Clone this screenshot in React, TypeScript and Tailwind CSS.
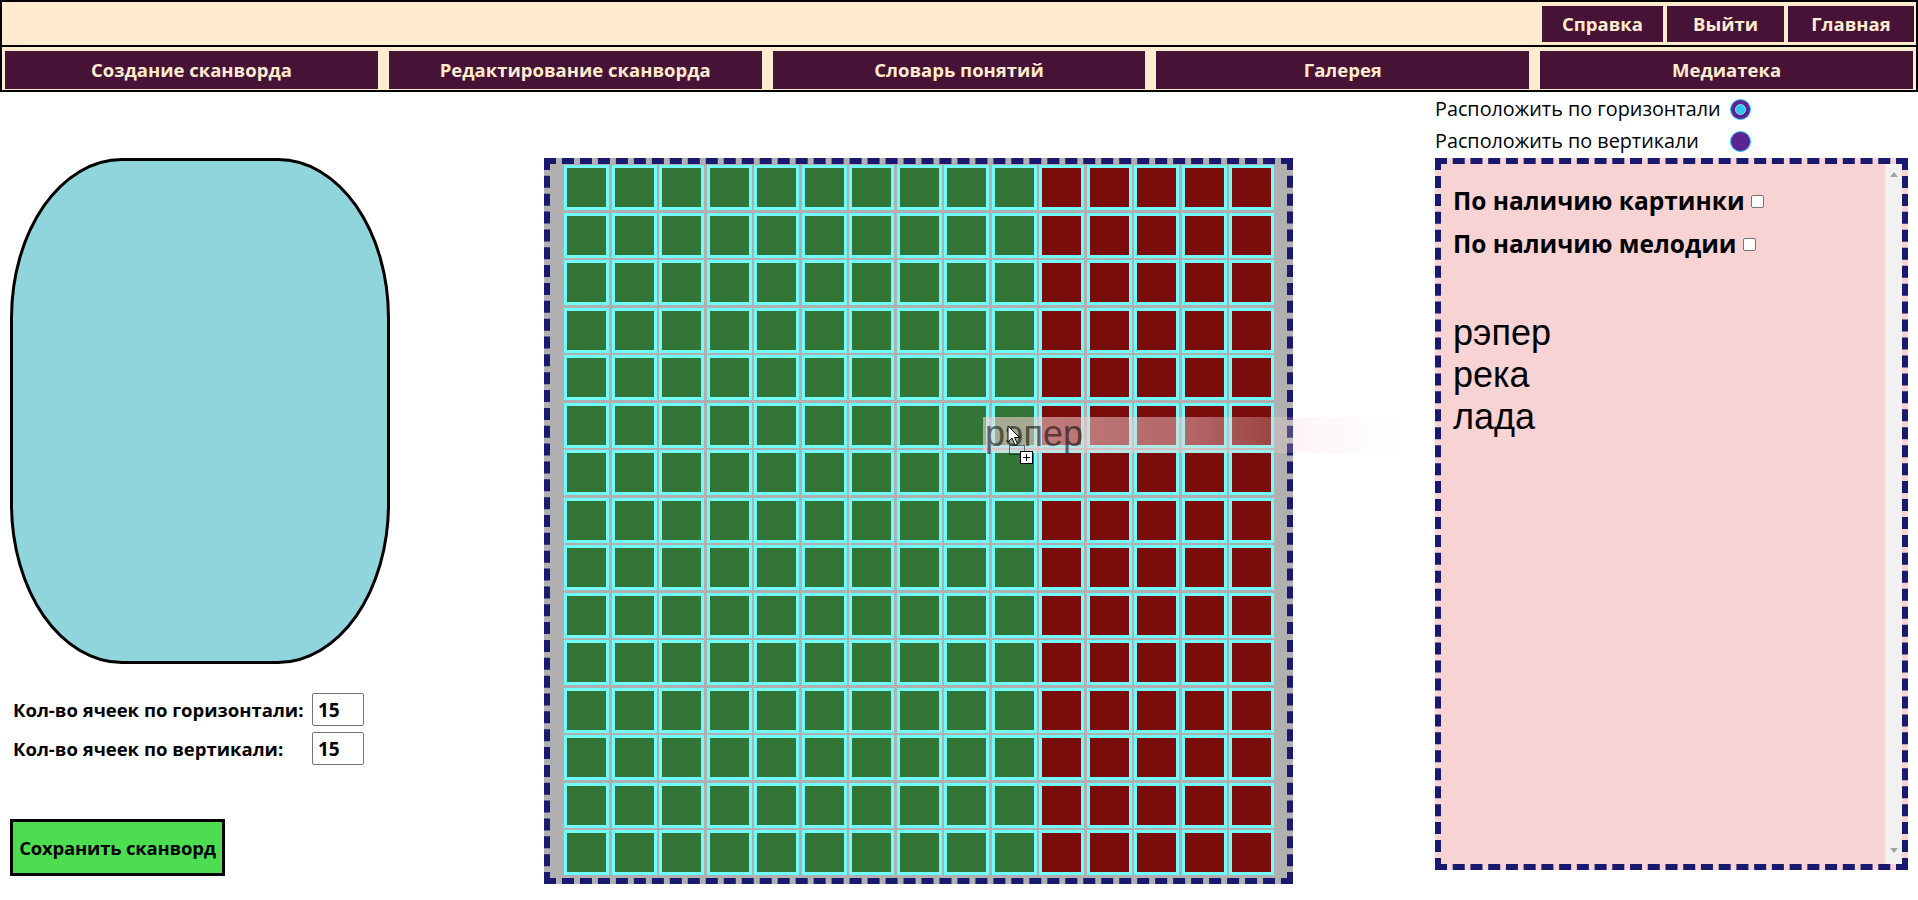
import React from 'react';

const NAV_ITEMS = ['Создание сканворда', 'Редактирование сканворда', 'Словарь понятий', 'Галерея', 'Медиатека'];
const TOP_ITEMS = [
  { label: 'Справка', w: 'w-[121px]' },
  { label: 'Выйти', w: 'w-[117px]' },
  { label: 'Главная', w: 'w-[126px]' },
];
const WORDS = ['рэпер', 'река', 'лада'];
const SIZE = 15;

const Radio: React.FC<{ checked?: boolean }> = ({ checked }) => (
  <span className="shrink-0 w-[21px] h-[21px] rounded-full bg-[#5a2592] border-[1.5px] border-[#29d0ee] flex items-center justify-center">
    {checked && <span className="w-[11px] h-[11px] rounded-full bg-[#2ec4ee] border border-[#7fe6fa]" />}
  </span>
);

const Checkbox: React.FC = () => (
  <span className="ml-[6px] w-[13px] h-[13px] rounded-[2px] border border-[#767676] bg-white" />
);

const Cursor: React.FC = () => (
  <svg className="absolute left-[1007px] top-[425px]" width="30" height="42" viewBox="0 0 30 42">
    <path d="M1 1 L1 17 L5 13 L8 20 L10.5 19 L7.5 12.5 L12.5 12.5 Z" fill="#fff" stroke="#000" strokeWidth="1" />
    <rect x="2.5" y="20.5" width="15" height="9" fill="none" stroke="#000" strokeWidth="1" strokeDasharray="1 1" />
    <rect x="13.5" y="26.5" width="12" height="12" fill="#fff" stroke="#000" strokeWidth="1" />
    <path d="M19.5 29 V36 M16 32.5 H23" stroke="#000" strokeWidth="1" />
  </svg>
);

export default function App() {
  return (
    <div className="relative w-[1918px] min-h-[900px] bg-white text-black font-['Open_Sans',sans-serif]">
      <header className="h-[47px] border-2 border-black bg-[#ffebcd] flex justify-end items-start pt-[4px] pr-[2px]">
        <div className="flex gap-1">
          {TOP_ITEMS.map(it => (
            <button key={it.label} className={`${it.w} h-[36px] bg-[#461337] text-[#ffebcd] text-[18.5px] font-bold flex items-center justify-center`}>
              {it.label}
            </button>
          ))}
        </div>
      </header>

      <nav className="-mt-[2px] border-2 border-black bg-[#ffebcd] flex gap-[11px] pl-[3px] pr-[3px] pt-[4px] pb-px">
        {NAV_ITEMS.map(item => (
          <button key={item} className="flex-1 h-[38px] bg-[#461337] text-[#ffebcd] text-[18.5px] font-bold flex items-center justify-center">
            {item}
          </button>
        ))}
      </nav>

      <main className="flex items-start">
        {/* левая колонка */}
        <div className="ml-[10px] mt-[66px] w-[380px] flex flex-col">
          <div className="w-[380px] h-[506px] bg-[#91d5dc] border-[3px] border-black rounded-[112px/160px]" />
          <div className="mt-[29px] flex flex-col gap-[6px] pl-[3px]">
            <div className="flex items-center h-[33px]">
              <span className="w-[299px] text-[18.5px] font-bold whitespace-nowrap">Кол-во ячеек по горизонтали:</span>
              <input readOnly value="15" className="w-[52px] h-[33px] border border-[#767676] rounded-[2px] px-[5px] text-[19px] font-bold" />
            </div>
            <div className="flex items-center h-[33px]">
              <span className="w-[299px] text-[18.5px] font-bold whitespace-nowrap">Кол-во ячеек по вертикали:</span>
              <input readOnly value="15" className="w-[52px] h-[33px] border border-[#767676] rounded-[2px] px-[5px] text-[19px] font-bold" />
            </div>
          </div>
          <button className="mt-[54px] w-[215px] h-[57px] bg-[#4cde50] border-[3px] border-black text-[18.5px] font-bold tracking-[-0.2px] flex items-center justify-center">
            Сохранить сканворд
          </button>
        </div>

        {/* поле сканворда */}
        <div className="ml-[154px] mt-[66px] border-[6px] border-dashed border-[#191970] bg-[#b0b0b0] pl-[14px] pr-[13px] pt-px pb-[3px]">
          <div className="grid grid-cols-[repeat(15,45px)] gap-[2.5px]">
            {Array.from({ length: SIZE * SIZE }, (_, i) => (
              <div
                key={i}
                className={`w-[45px] h-[45px] border-[3px] border-[#70fcfc] ${i % SIZE < 10 ? 'bg-[#337536]' : 'bg-[#7a0c0c]'}`}
              />
            ))}
          </div>
        </div>

        {/* правая колонка */}
        <div className="ml-[142px] w-[473px] pt-px flex flex-col">
          <div className="flex items-center h-[32px] text-[19.8px] font-medium">
            <span className="shrink-0 w-[295px] whitespace-nowrap">Расположить по горизонтали</span>
            <Radio checked />
          </div>
          <div className="flex items-center h-[32px] text-[19.8px] font-medium">
            <span className="shrink-0 w-[295px] whitespace-nowrap">Расположить по вертикали</span>
            <Radio />
          </div>
          <div className="mt-px h-[712px] border-[6px] border-dashed border-[#191970] bg-[#f8d3d3] flex">
            <div className="flex-1 pl-[12px] pt-[21px]">
              <div className="flex flex-col gap-[11px]">
                <div className="flex items-center h-[32px] text-[24.5px] font-bold">
                  По наличию картинки
                  <Checkbox />
                </div>
                <div className="flex items-center h-[32px] text-[24.5px] font-bold">
                  По наличию мелодии
                  <Checkbox />
                </div>
              </div>
              <div className="mt-[52px] font-['Liberation_Sans',Arial,sans-serif] text-[36px] leading-[42px]">
                {WORDS.map(w => (
                  <div key={w}>{w}</div>
                ))}
              </div>
            </div>
            <div className="w-[17px] bg-[#f1f1f1] flex flex-col items-center justify-between pt-[8px] pb-[11px]">
              <span className="w-0 h-0 border-l-[4px] border-r-[4px] border-b-[5px] border-l-transparent border-r-transparent border-b-[#a3a3a3]" />
              <span className="w-0 h-0 border-l-[4px] border-r-[4px] border-t-[5px] border-l-transparent border-r-transparent border-t-[#a3a3a3]" />
            </div>
          </div>
        </div>
      </main>

      {/* призрак перетаскиваемого слова */}
      <div className="absolute left-[983px] top-[417px] w-[420px] h-[36px] pointer-events-none bg-gradient-to-r from-[#f8d3d3]/60 via-[#f8d3d3]/45 to-transparent">
        <div className="-mt-[4px] pl-[2px] font-['Liberation_Sans',Arial,sans-serif] text-[36px] leading-[42px] text-black/55">рэпер</div>
      </div>
      <Cursor />
    </div>
  );
}
